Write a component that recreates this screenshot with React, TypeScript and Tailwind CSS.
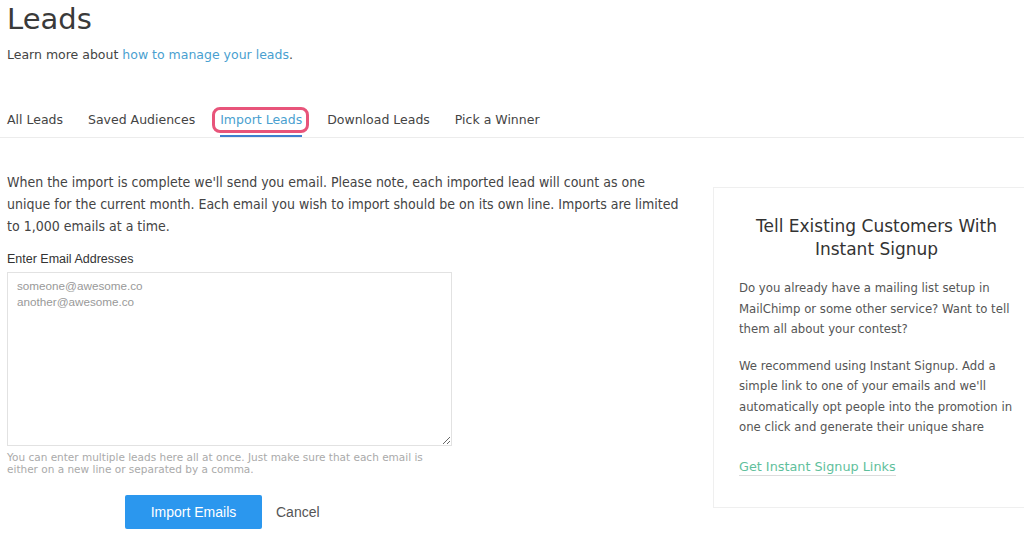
import React from "react";

const tabs = ["All Leads", "Saved Audiences", "Import Leads", "Download Leads", "Pick a Winner"];

const verdana = "font-['DejaVu_Sans',Verdana,sans-serif]";
const tahoma = "font-['DejaVu_Sans_Condensed','DejaVu_Sans',Tahoma,sans-serif]";
const arial = "font-['Liberation_Sans',Arial,sans-serif]";

export default function App() {
  return (
    <div className={`w-[1024px] h-[533px] overflow-hidden bg-white text-[#333] ${verdana}`}>
      {/* Header */}
      <div className="pl-[7px]">
        <h1 className="text-[29px] leading-[38px] text-[#3a3a3a] font-normal">Leads</h1>
        <p className="mt-[8px] text-[12.5px] leading-[18px] text-[#444]">
          Learn more about <span className="text-[#4a9fd0]">how to manage your leads</span>.
        </p>
      </div>

      {/* Tabs */}
      <div className="mt-[46px] border-b border-[#ececec] flex gap-[25px] pl-[7px] pt-[2px] h-[28px] text-[12.5px] leading-[16px]">
        {tabs.map((t) => {
          const active = t === "Import Leads";
          return (
            <div key={t} className="relative">
              <span className={active ? "text-[#4a9fd0]" : "text-[#444]"}>{t}</span>
              {active && (
                <>
                  <div className="absolute left-0 right-0 top-[23px] h-[2px] bg-[#3f7fcf]" />
                  <div className="absolute -left-[8px] -right-[7px] -top-[5px] h-[26px] rounded-[8px] border-[3px] border-[#e8547a]" />
                </>
              )}
            </div>
          );
        })}
      </div>

      <div className="flex">
        {/* Left column */}
        <div className="w-[713px] pl-[7px] pt-[33px] shrink-0">
          <p className={`${tahoma} text-[14px] leading-[22px] text-[#444] w-[684px]`}>
            When the import is complete we'll send you email. Please note, each imported lead will count as one
            unique for the current month. Each email you wish to import should be on its own line. Imports are
            limited to 1,000 emails at a time.
          </p>
          <label className={`${arial} block mt-[14px] text-[12.5px] leading-[16px] text-[#333]`}>
            Enter Email Addresses
          </label>
          <textarea
            className={`${arial} mt-[5px] block w-[445px] h-[174px] border border-[#e2e2e2] px-[9px] py-[5px] text-[11.7px] leading-[16px] text-[#999] placeholder:text-[#999] outline-none`}
            placeholder={"someone@awesome.co\nanother@awesome.co"}
          />
          <p className="mt-[5px] text-[10.5px] leading-[12px] text-[#aaa] w-[430px]">
            You can enter multiple leads here all at once. Just make sure that each email is either on a new line
            or separated by a comma.
          </p>
          <div className="mt-[20px] flex items-center pl-[118px]">
            <button className={`${arial} w-[137px] h-[34px] bg-[#2b97ee] text-white text-[14px] rounded-[2px]`}>
              Import Emails
            </button>
            <span className={`${arial} ml-[14px] text-[14px] text-[#555]`}>Cancel</span>
          </div>
        </div>

        {/* Right panel */}
        <div className="mt-[49px] w-[330px] h-[321px] shrink-0 border border-[#efefef] pl-[25px] pr-[20px] pt-[27px]">
          <h2 className="text-center text-[17px] leading-[23px] text-[#333] w-[275px]">
            Tell Existing Customers With Instant Signup
          </h2>
          <p className={`${tahoma} mt-[17px] text-[13px] leading-[20.5px] text-[#555] w-[285px]`}>
            Do you already have a mailing list setup in MailChimp or some other service? Want to tell them all
            about your contest?
          </p>
          <p className={`${tahoma} mt-[16px] text-[13px] leading-[20.5px] text-[#555] w-[285px]`}>
            We recommend using Instant Signup. Add a simple link to one of your emails and we'll automatically opt
            people into the promotion in one click and generate their unique share
          </p>
          <a className="inline-block mt-[20px] text-[12.8px] leading-[17px] text-[#5fbf9c] border-b border-[#dcdcdc]">
            Get Instant Signup Links
          </a>
        </div>
      </div>
    </div>
  );
}
